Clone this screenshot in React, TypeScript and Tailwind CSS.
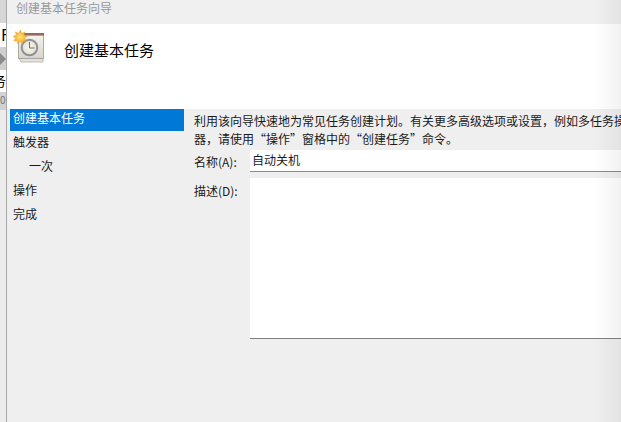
import React from "react";

const FONT = "font-['Noto_Sans_CJK_SC','Noto_Sans',sans-serif]";

const steps = [
  { label: "创建基本任务", active: true },
  { label: "触发器" },
  { label: "一次", indent: true },
  { label: "操作" },
  { label: "完成" },
];

const TaskIcon = () => (
  <svg width="32" height="33" viewBox="0 0 32 33" className="shrink-0">
    <defs>
      <linearGradient id="card" x1="0" y1="0" x2="0" y2="1">
        <stop offset="0" stopColor="#f6f3ee" />
        <stop offset="1" stopColor="#d9d5cc" />
      </linearGradient>
      <radialGradient id="face" cx="0.5" cy="0.5" r="0.6">
        <stop offset="0" stopColor="#fbf8ef" />
        <stop offset="1" stopColor="#dfd9c8" />
      </radialGradient>
      <radialGradient id="sun" cx="0.5" cy="0.5" r="0.5">
        <stop offset="0" stopColor="#ffe27a" />
        <stop offset="1" stopColor="#f2a51c" />
      </radialGradient>
    </defs>
    <path d="M6 28h24v4H8z" fill="#e4e2dc" stroke="#a9a69e" strokeWidth="0.7" />
    <rect x="5.5" y="4.5" width="25" height="24" fill="url(#card)" stroke="#9d9a92" strokeWidth="0.8" />
    <rect x="6" y="3" width="25" height="2.6" fill="#96685a" />
    <circle cx="16.5" cy="17.5" r="7.8" fill="url(#face)" stroke="#8d9199" strokeWidth="2" />
    <path d="M16.5 12V18H21.5" fill="none" stroke="#6e6a60" strokeWidth="1" />
    <path
      d="M7.5 0l1.4 3.4 3-1.6-.8 3.4 3.2 1-2.8 1.9 1.7 2.9-3.4-.3-.4 3.4-2.4-2.5-2.4 2.5-.4-3.4-3.4.3 1.7-2.9L0 6.2l3.2-1-.8-3.4 3 1.6z"
      fill="url(#sun)"
      stroke="#e8a020"
      strokeWidth="0.4"
    />
  </svg>
);

// bits of the window behind the wizard, only a few px show
const BehindStrip = () => (
  <div className="w-[7px] shrink-0 flex flex-col overflow-hidden border-r border-[#a8a8a8] bg-[#ececec] text-black leading-none">
    <div className="h-[23px] bg-[#d6d6d6]" />
    <div className="h-[24px] bg-white pt-[3px] pl-[1px] text-[16px]">F</div>
    <div className="h-[23px] bg-[#cfcfcf] flex items-center">
      <div className="w-[10px] h-[10px] rotate-45 bg-[#8b8b8b] -ml-[6px]" />
    </div>
    <div className="h-[22px] bg-white pt-[3px] text-[14px] whitespace-nowrap -ml-[8px]">务</div>
    <div className="h-[18px] bg-[#d2d2d2] text-[10px] text-[#777] pt-[3px]">0</div>
  </div>
);

export default function App() {
  return (
    <div className={`relative w-[621px] h-[422px] flex overflow-hidden bg-[#efefef] ${FONT}`}>
      <BehindStrip />

      <div className="flex-1 min-w-0 flex flex-col">
        <div className="h-[24px] shrink-0 bg-[#f0f0f0] pl-[9px] text-[12px] leading-[15px] text-[#9a9a9a]">
          创建基本任务向导
        </div>

        <div className="h-[85px] shrink-0 bg-white flex items-start pt-[6px] pl-[6px]">
          <TaskIcon />
          <div className="ml-[19px] mt-[10px] text-[15px] leading-[20px] text-black">创建基本任务</div>
        </div>

        <div className="flex-1 flex min-h-0">
          <div className="w-[177px] shrink-0 pl-[3px] text-[12px] text-[#1a1a1a]">
            {steps.map((s) => (
              <div
                key={s.label}
                className={`leading-[18px] ${s.indent ? "pl-[19px]" : "pl-[3px]"} ${
                  s.active ? "bg-[#0078d7] text-white h-[22px] mb-[2px]" : "h-[24px]"
                }`}
              >
                {s.label}
              </div>
            ))}
          </div>

          <div className="flex-1 min-w-0 pl-[10px] pt-[3px] text-[12px] text-[#1a1a1a]">
            <p className="whitespace-nowrap leading-[18px]">
              利用该向导快速地为常见任务创建计划。有关更多高级选项或设置，例如多任务操作或触发器
            </p>
            <p className="whitespace-nowrap leading-[18px]">器，请使用“操作”窗格中的“创建任务”命令。</p>

            <div className="mt-[2px] flex">
              <div className="w-[56px] shrink-0 pt-[3px] leading-[18px]">名称(A):</div>
              <div className="flex-1 h-[22px] bg-white border-b border-[#8a8a8a] pl-[2px] leading-[20px]">
                自动关机
              </div>
            </div>

            <div className="mt-[6px] flex">
              <div className="w-[56px] shrink-0 pt-[4px] leading-[18px]">描述(D):</div>
              <div className="flex-1 h-[161px] bg-white border-b border-[#808080]" />
            </div>
          </div>
        </div>
      </div>

      {/* soft fade on the right edge */}
      <div className="absolute top-0 bottom-0 right-0 w-[28px] pointer-events-none bg-gradient-to-r from-transparent to-black/5" />
    </div>
  );
}
